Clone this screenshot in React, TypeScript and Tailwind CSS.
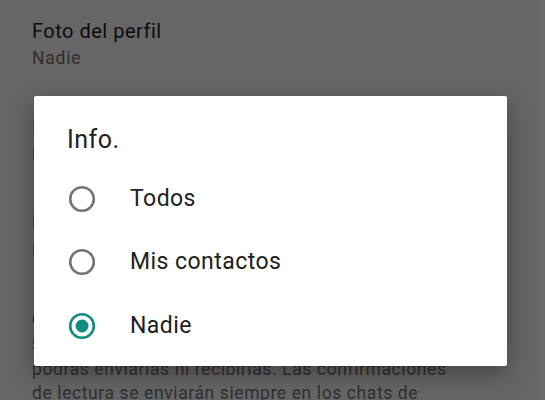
import React from "react";

function Item({ title, sub }: { title: string; sub: React.ReactNode }) {
  return (
    <div className="h-[96px] pt-[17px] pl-[32px]">
      <div className="text-[20px] leading-[28px] tracking-[0.5px] text-[#212121]">{title}</div>
      <div className="text-[17.5px] leading-[24px] mt-[1px] tracking-[0.8px] text-[#757575]">{sub}</div>
    </div>
  );
}

function Radio({ checked }: { checked?: boolean }) {
  return (
    <svg width="28" height="28" viewBox="0 0 28 28">
      <circle
        cx="14"
        cy="14"
        r="11.8"
        fill="none"
        stroke={checked ? "#128C7E" : "#757575"}
        strokeWidth="2.6"
      />
      {checked && <circle cx="14" cy="14" r="6.5" fill="#128C7E" />}
    </svg>
  );
}

export default function App() {
  const opts = ["Todos", "Mis contactos", "Nadie"];
  return (
    <div
      className="relative w-[545px] h-[400px] overflow-hidden bg-white"
      style={{ fontFamily: "Roboto, 'Noto Sans', sans-serif" }}
    >
      <div>
        <Item title="Foto del perfil" sub="Nadie" />
        <Item title="Info." sub="Nadie" />
        <Item title="Estados" sub="Mis contactos" />
        <div className="pt-[17px] pl-[32px]">
          <div className="text-[20px] leading-[28px] tracking-[0.5px] text-[#212121]">Confirmaciones de lectura</div>
          <div className="text-[17.5px] leading-[24px] tracking-[0.6px] text-[#757575] whitespace-nowrap">
            <div>Si desactivas las confirmaciones de lectura, no</div>
            <div>podrás enviarlas ni recibirlas. Las confirmaciones</div>
            <div>de lectura se enviarán siempre en los chats de</div>
            <div>grupo.</div>
          </div>
        </div>
      </div>
      <div className="absolute inset-0 bg-black/60" />
      <div className="absolute top-0 right-0 h-full w-[7px] bg-white/[0.03]" />
      <div className="absolute left-[34px] top-[96px] w-[473px] h-[270px] bg-white rounded-[2px] shadow-[0_8px_24px_rgba(0,0,0,0.35)]">
        <div className="pl-[33px] pt-[28px] text-[25px] leading-[32px] tracking-[0.5px] text-[#212121]">Info.</div>
        <div className="mt-[11px]">
          {opts.map((o, i) => (
            <div key={o} className="flex items-center h-[63.5px] pl-[34px]">
              <Radio checked={i === 2} />
              <span className="ml-[34px] text-[23px] tracking-[0.45px] text-[#212121]">{o}</span>
            </div>
          ))}
        </div>
      </div>
    </div>
  );
}
